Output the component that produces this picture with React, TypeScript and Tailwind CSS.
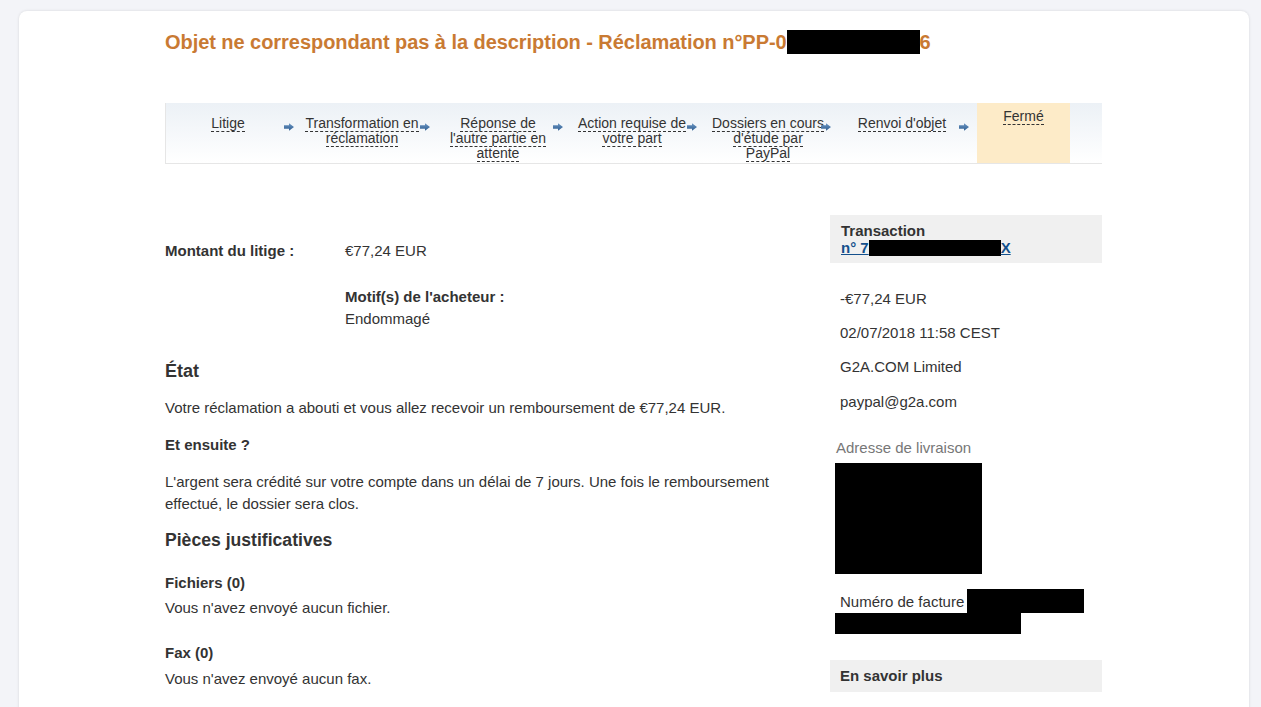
import React from "react";

const Arrow = () => (
  <svg width="11" height="8" viewBox="0 0 11 8">
    <defs>
      <linearGradient id="ag" x1="0" y1="0" x2="0" y2="1">
        <stop offset="0" stopColor="#6b95c2" />
        <stop offset="1" stopColor="#2f5f93" />
      </linearGradient>
    </defs>
    <path d="M0 2h5.5V0L11 4 5.5 8V6H0z" fill="url(#ag)" />
  </svg>
);

type Step = { lines: string[]; ml: number; w: number };

const steps: Step[] = [
  { lines: ["Litige"], ml: 6, w: 112 },
  { lines: ["Transformation en", "réclamation"], ml: 10, w: 116 },
  { lines: ["Réponse de", "l'autre partie en", "attente"], ml: 13, w: 110 },
  { lines: ["Action requise de", "votre part"], ml: 14, w: 110 },
  { lines: ["Dossiers en cours", "d'étude par", "PayPal"], ml: 18, w: 106 },
  { lines: ["Renvoi d'objet"], ml: 14, w: 114 },
];

const Dashed = ({ children }: { children: React.ReactNode }) => (
  <span className="border-b border-dashed border-[#333]">{children}</span>
);

export default function App() {
  return (
    <div
      className="min-h-[707px] bg-[#f3f4f8] pt-[11px] text-[#333] text-[15px]"
      style={{ fontFamily: '"Liberation Sans", Arial, sans-serif' }}
    >
      <div className="ml-[19px] w-[1230px] min-h-[720px] rounded-lg bg-white shadow-[0_0_3px_rgba(0,0,0,0.12)] pt-[19px]">
        <div className="ml-[146px] w-[937px]">
          {/* Title */}
          <h1 className="flex items-center h-[24px] text-[20px] tracking-[-0.05px] font-bold text-[#c97a33] leading-[24px]">
            <span>Objet ne correspondant pas à la description - Réclamation n°PP-0</span>
            <span className="inline-block w-[133px] h-[24px] bg-black" />
            <span>6</span>
          </h1>

          {/* Steps bar */}
          <div className="mt-[49px] h-[61px] flex border-l border-b border-[#e6e6e6] bg-gradient-to-b from-[#ecf1f6] to-[#ffffff]">
            {steps.map((s, i) => (
              <React.Fragment key={i}>
                <div
                  className="flex flex-col items-center pt-[13px] leading-[15px] text-[14px]"
                  style={{ marginLeft: s.ml, width: s.w }}
                >
                  {s.lines.map((l, j) => (
                    <div key={j} className="whitespace-nowrap">
                      <Dashed>{l}</Dashed>
                    </div>
                  ))}
                </div>
                <div className="w-[10px] pt-[20px] flex justify-center">
                  <Arrow />
                </div>
              </React.Fragment>
            ))}
            <div className="ml-[8px] w-[93px] h-[60px] bg-[#fdebc8] flex flex-col items-center pt-[6px] leading-[15px] text-[14px]">
              <div className="whitespace-nowrap">
                <Dashed>Fermé</Dashed>
              </div>
            </div>
          </div>

          {/* Main content */}
          <div className="mt-[51px] flex justify-between">
            {/* Left column */}
            <div className="w-[625px] leading-[22px]">
              <div className="mt-[25px] flex">
                <div className="w-[180px] font-bold">Montant du litige :</div>
                <div>€77,24 EUR</div>
              </div>
              <div className="mt-[24px] ml-[180px]">
                <div className="font-bold">Motif(s) de l'acheteur :</div>
                <div>Endommagé</div>
              </div>
              <h2 className="mt-[29px] text-[18px] font-bold leading-[24px]">État</h2>
              <p className="mt-[14px]">
                Votre réclamation a abouti et vous allez recevoir un remboursement de €77,24 EUR.
              </p>
              <div className="mt-[15px] font-bold">Et ensuite ?</div>
              <p className="mt-[15px]">
                L'argent sera crédité sur votre compte dans un délai de 7 jours. Une fois le remboursement
                effectué, le dossier sera clos.
              </p>
              <h2 className="mt-[13px] text-[17.6px] font-bold leading-[24px]">Pièces justificatives</h2>
              <div className="mt-[20px] font-bold">Fichiers (0)</div>
              <div className="mt-[3px]">Vous n'avez envoyé aucun fichier.</div>
              <div className="mt-[23px] font-bold">Fax (0)</div>
              <div className="mt-[4px]">Vous n'avez envoyé aucun fax.</div>
            </div>

            {/* Right column */}
            <div className="w-[272px]">
              <div className="h-[48px] bg-[#f0f0f0] pl-[11px] pt-[7px] leading-[17px] font-bold">
                <div>Transaction</div>
                <a href="#" className="flex items-center text-[#14508c] underline">
                  <span>n° 7</span>
                  <span className="inline-block w-[132px] h-[16px] bg-black" />
                  <span>X</span>
                </a>
              </div>
              <div className="pl-[10px] leading-[22px]">
                <div className="mt-[25px]">-€77,24 EUR</div>
                <div className="mt-[12px]">02/07/2018 11:58 CEST</div>
                <div className="mt-[12px]">G2A.COM Limited</div>
                <div className="mt-[13px]">paypal@g2a.com</div>
              </div>
              <div className="mt-[24px] pl-[6px] leading-[22px] text-[#777]">Adresse de livraison</div>
              <div className="mt-[4px] ml-[5px] w-[147px] h-[111px] bg-black" />
              <div className="mt-[15px] ml-[5px] flex">
                <div className="h-[24px] pl-[5px] pr-[3px] pt-[2px] leading-[22px] bg-white">Numéro de facture</div>
                <div className="w-[117px] h-[24px] bg-black" />
              </div>
              <div className="ml-[5px] w-[186px] h-[21px] bg-black" />
              <div className="mt-[26px] h-[32px] bg-[#f0f0f0] pl-[10px] flex items-center font-bold">
                En savoir plus
              </div>
            </div>
          </div>
        </div>
      </div>
    </div>
  );
}
